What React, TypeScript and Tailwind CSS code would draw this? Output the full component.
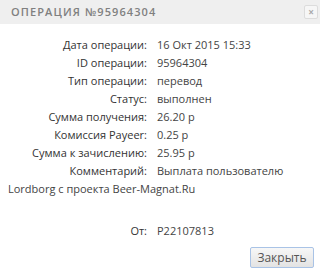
const rows: [string, string][] = [
  ['Дата операции:', '16 Окт 2015 15:33'],
  ['ID операции:', '95964304'],
  ['Тип операции:', 'перевод'],
  ['Статус:', 'выполнен'],
  ['Сумма получения:', '26.20 р'],
  ['Комиссия Payeer:', '0.25 р'],
  ['Сумма к зачислению:', '25.95 р'],
]

export default function App() {
  return (
    <div
      className="w-[320px] h-[275px] bg-white text-[11px] text-[#333] overflow-hidden"
      style={{ fontFamily: '"Open Sans", "DejaVu Sans", sans-serif' }}
    >
      <div className="h-6 bg-[#efefef] flex items-center justify-between pl-[11px] pr-[2px]">
        <span className="text-[11px] tracking-[1.1px] text-[#808080] font-semibold uppercase">
          Операция №95964304
        </span>
        <button className="w-[14px] h-[14px] border border-[#dcdcdc] rounded-[2px] bg-[#f6f6f6] flex items-center justify-center text-[10px] leading-none font-bold text-[#aaa]">
          ×
        </button>
      </div>

      <div className="pt-[12px]">
        {rows.map(([label, value]) => (
          <div key={label} className="flex h-[18px] items-center">
            <div className="w-[147px] text-right">{label}</div>
            <div className="pl-[10px] text-[#444]">{value}</div>
          </div>
        ))}
        <div className="flex h-[18px] items-center">
          <div className="w-[147px] text-right">Комментарий:</div>
          <div className="pl-[10px] text-[#444]">Выплата пользователю</div>
        </div>
        <div className="h-[18px] flex items-center pl-[8px] text-[#444]">
          Lordborg с проекта Beer-Magnat.Ru
        </div>
        <div className="flex h-[18px] items-center mt-[24px]">
          <div className="w-[147px] text-right">От:</div>
          <div className="pl-[10px] text-[#444]">P22107813</div>
        </div>
      </div>

      <div className="flex justify-end pr-[6px] pt-[7px]">
        <button className="w-[64px] h-[21px] border border-[#a9c3e6] rounded-[2px] bg-gradient-to-b from-[#f7f7f7] to-[#e3e3e3] text-[12px] text-[#555]">
          Закрыть
        </button>
      </div>
    </div>
  )
}
